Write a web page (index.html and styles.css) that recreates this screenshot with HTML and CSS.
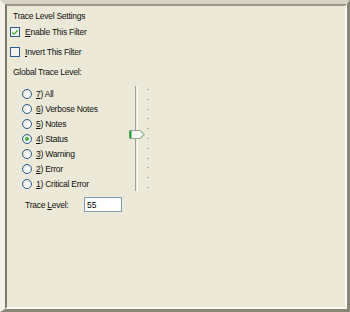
FILE: index.html
```html
<!DOCTYPE html>
<html lang="en">
<head>
  <meta charset="UTF-8">
  <title>Trace Level Settings</title>
  <link rel="stylesheet" href="styles.css">
</head>
<body>

<div class="frame">
  <div class="panel">
    <div class="title">Trace Level Settings</div>

    <label class="check">
      <svg class="box" width="10" height="10" viewBox="0 0 10 10">
        <rect x="0.5" y="0.5" width="9" height="9" fill="#f4f4ef" stroke="#2b5d8c"/>
        <path d="M2.3 4.6 L4 6.4 L7.7 2.6 L7.7 4.2 L4 7.9 L2.3 6.2 Z" fill="#21a121"/>
      </svg>
      <span><u>E</u>nable This Filter</span>
    </label>

    <label class="check">
      <svg class="box" width="10" height="10" viewBox="0 0 10 10">
        <rect x="0.5" y="0.5" width="9" height="9" fill="#f4f4ef" stroke="#2b5d8c"/>
      </svg>
      <span><u>I</u>nvert This Filter</span>
    </label>

    <div class="group-label">Global Trace Level:</div>

    <div class="levels">
      <div class="radios">
        <label class="radio"><span class="dot"></span><span><u>7</u>) All</span></label>
        <label class="radio"><span class="dot"></span><span><u>6</u>) Verbose Notes</span></label>
        <label class="radio"><span class="dot"></span><span><u>5</u>) Notes</span></label>
        <label class="radio on"><span class="dot"></span><span><u>4</u>) Status</span></label>
        <label class="radio"><span class="dot"></span><span><u>3</u>) Warning</span></label>
        <label class="radio"><span class="dot"></span><span><u>2</u>) Error</span></label>
        <label class="radio"><span class="dot"></span><span><u>1</u>) Critical Error</span></label>
      </div>

      <div class="slider">
        <div class="track"></div>
        <div class="ticks">
          <i></i><i></i><i></i><i></i><i></i><i></i><i></i><i></i><i></i><i></i><i></i>
        </div>
        <svg class="thumb" width="16" height="9" viewBox="0 0 16 9">
          <path d="M0.5 0.5 H11 L15 4.5 L11 8.5 H0.5 Z" fill="#f7f7f4" stroke="#9ea39a"/>
          <rect x="0.5" y="1" width="2" height="7" fill="#21a121"/>
          <path d="M11 0.5 L15 4.5 L11 8.5" fill="none" stroke="#6cbf6c"/>
        </svg>
      </div>
    </div>

    <div class="level-row">
      <span class="level-label">Trace <u>L</u>evel:</span>
      <input class="level-input" type="text" value="55">
    </div>
  </div>
</div>

</body>
</html>
```

FILE: styles.css
```css
body {
  margin: 0;
  background: #ece9d8;
  font-family: 'Liberation Sans', Arial, sans-serif;
  font-size: 8.5px;
  letter-spacing: -0.25px;
  color: #111;
}
.frame {
  width: 350px;
  height: 312px;
  box-sizing: border-box;
  border-top: 4px solid #d6d3c6;
  border-left: 5px solid #f3f1e8;
  border-right: 3px solid #8a8778;
  border-bottom: 3px solid #8a8778;
}
.panel {
  height: 100%;
  box-sizing: border-box;
  border-top: 2px solid #9b988a;
  border-left: 2px solid #7d7a6c;
  border-right: 2px solid #fbfaf5;
  border-bottom: 2px solid #fbfaf5;
  background: #ece9d8;
  padding: 4px 0 0 3px;
}
.title {
  height: 12px;
  line-height: 12px;
  margin-left: 3px;
}
.check {
  display: flex;
  align-items: center;
  gap: 5px;
  height: 20px;
}
.box {
  display: block;
}
.group-label {
  height: 20px;
  line-height: 20px;
  margin-left: 3px;
}
.levels {
  display: flex;
  margin-top: 4px;
  padding-left: 12px;
}
.radios {
  width: 107px;
}
.radio {
  display: flex;
  align-items: center;
  gap: 4px;
  height: 15px;
}
.dot {
  width: 10px;
  height: 10px;
  box-sizing: border-box;
  border: 1px solid #2b5d8c;
  border-radius: 50%;
  background: radial-gradient(circle at 65% 65%, #fff 20%, #dcdcd3 90%);
  position: relative;
}
.radio.on .dot::after {
  content: "";
  position: absolute;
  left: 2px;
  top: 2px;
  width: 4px;
  height: 4px;
  border-radius: 50%;
  background: #3cb43c;
}
.slider {
  position: relative;
  width: 24px;
  height: 105px;
  display: flex;
}
.track {
  margin-left: 6px;
  width: 1px;
  border-left: 1px solid #a3a095;
  border-right: 1px solid #fff;
  height: 105px;
}
.ticks {
  margin-left: 9px;
  padding-top: 3px;
  display: flex;
  flex-direction: column;
  gap: 8.8px;
}
.ticks i {
  display: block;
  width: 2px;
  height: 1px;
  background: #b5b2a6;
}
.thumb {
  position: absolute;
  left: 0;
  top: 44px;
}
.level-row {
  display: flex;
  align-items: center;
  margin-top: 6px;
  padding-left: 15px;
}
.level-label {
  width: 59px;
}
.level-input {
  width: 38px;
  height: 15px;
  box-sizing: border-box;
  border: 1px solid #7f9db9;
  background: #fff;
  padding: 0 2px;
  font: inherit;
  margin: 0;
}
```
